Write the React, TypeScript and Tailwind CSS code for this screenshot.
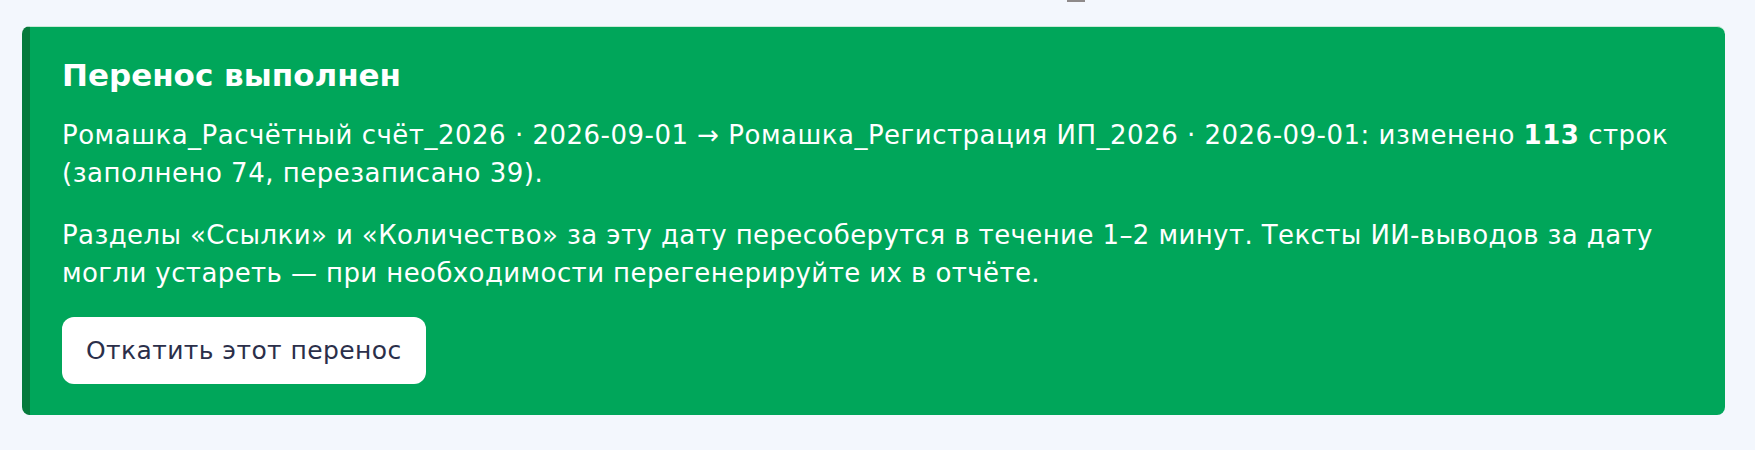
import React from "react";

export default function App() {
  return (
    <div
      className="min-h-screen w-full bg-[#f3f7fd] px-[22px] pb-8"
      style={{ fontFamily: "'DejaVu Sans', 'Noto Sans', sans-serif" }}
    >
      {/* край элемента над карточкой */}
      <div className="h-[2px] w-[18px] ml-[1045px] bg-[#8e8a8a]" />

      {/* Success card */}
      <section className="mt-[24px] w-[1703px] rounded-lg bg-[#00a65a] border-l-[8px] border-[#067a3c] border-t border-t-[#c9e9d6] pl-8 pr-6 pt-[28px] pb-[31px] text-white">
        <h2 className="text-[31px] leading-[40px] font-bold">Перенос выполнен</h2>

        <p className="mt-[21px] text-[26px] leading-[38px] tracking-[0.5px]">
          Ромашка_Расчётный счёт_2026 · 2026-09-01 → Ромашка_Регистрация ИП_2026 · 2026-09-01: изменено{" "}
          <b className="font-bold">113</b> строк (заполнено 74, перезаписано 39).
        </p>

        <p className="mt-6 text-[26px] leading-[38px] tracking-[0.4px]">
          Разделы «Ссылки» и «Количество» за эту дату пересоберутся в течение 1–2 минут. Тексты ИИ-выводов за дату
          могли устареть — при необходимости перегенерируйте их в отчёте.
        </p>

        <button className="mt-[25px] rounded-xl bg-white px-6 py-4 text-[25px] leading-[35px] tracking-[0.4px] text-[#2b2f4a]">
          Откатить этот перенос
        </button>
      </section>
    </div>
  );
}
